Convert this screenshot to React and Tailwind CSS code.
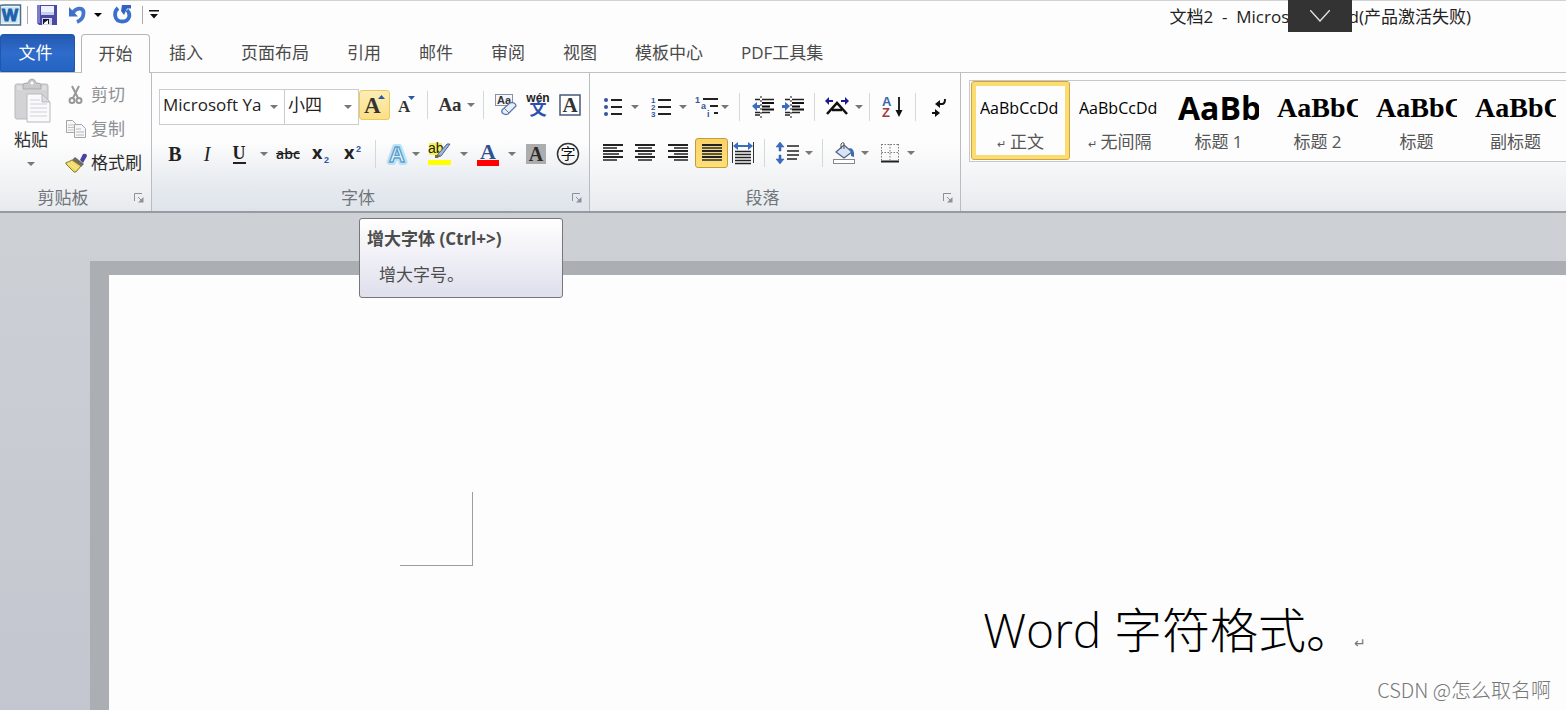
import React, { useState } from 'react';
import clsx from 'clsx';

const SERIF = '"Liberation Serif", serif';
const SANS = '"Open Sans", "Noto Sans CJK SC", sans-serif';
const ARIAL = '"Liberation Sans", sans-serif';

const tabs = ['插入', '页面布局', '引用', '邮件', '审阅', '视图', '模板中心', 'PDF工具集'];

const styles = [
    { name: '正文', mark: true, preview: 'AaBbCcDd', face: 'text-base' },
    { name: '无间隔', mark: true, preview: 'AaBbCcDd', face: 'text-base' },
    { name: '标题 1', preview: 'AaBb', face: 'text-[32px] font-bold' },
    { name: '标题 2', preview: 'AaBbC', face: 'font-["Liberation_Serif",serif] text-[28px] font-bold' },
    { name: '标题', preview: 'AaBbC', face: 'font-["Liberation_Serif",serif] text-[28px] font-bold' },
    { name: '副标题', preview: 'AaBbC', face: 'font-["Liberation_Serif",serif] text-[28px] font-bold' },
];

function Caret({ className = 'w-4', label = '更多选项' }) {
    return (
        <button type="button" aria-label={label} className={clsx('flex shrink-0 items-center justify-center py-2', className)}>
            <svg width="8" height="4" viewBox="0 0 8 4"><path d="M0 0h8L4 4z" fill="#777" /></svg>
        </button>
    );
}

function Sep({ className = 'mx-1.5' }) {
    return <span className={clsx('h-7 w-px shrink-0 bg-[#d5d8db]', className)} />;
}

function Tool({ label, className = 'w-8', active = false, children }) {
    return (
        <button
            type="button"
            aria-label={label}
            className={clsx('flex h-[30px] shrink-0 items-center justify-center', className, active && 'rounded-[3px] border')}
        >
            {children}
        </button>
    );
}

function Group({ title, className, children }) {
    return (
        <section className={clsx('flex flex-col border-r border-[#b9bdc2]', className)}>
            {children}
            <div className="mt-auto flex h-[26px] items-center pr-[7px]">
                <h2 className="flex-1 pr-2 text-center text-[17px] leading-6 text-[#70757b]">{title}</h2>
                <button type="button" aria-label={title}>
                    <svg width="10" height="10" viewBox="0 0 10 10" fill="none" stroke="#8d9196">
                        <path d="M.5 8V.5H8M4 4l3 3" />
                        <path d="M9.500 4v5.500H4z" fill="#8d9196" stroke="none" />
                    </svg>
                </button>
            </div>
        </section>
    );
}

/* Stacked bars: each row is [start, end] */
function Bars({ rows, width = 20, step = 3 }) {
    return (
        <svg width={width} height={rows.length * step} viewBox={`0 0 ${width} ${rows.length * step}`} shapeRendering="crispEdges">
            {rows.map(([a, b], i) => (
                <rect key={i} x={a} y={i * step} width={b - a} height="2" fill={i % 2 ? '#555' : '#222'} />
            ))}
        </svg>
    );
}

function QuickAccess() {
    return (
        <div className="flex items-center">
            <svg width="22" height="22" viewBox="0 0 22 22" aria-label="Word">
                <path d="M0 1.500 4 1h16.500v20H0z" fill="#e9f3f8" stroke="#4d6f88" strokeWidth="1.500" />
                <path d="M1 3h17v16H1z" fill="#cfe6f2" />
                <text x="10" y="17" fontSize="17" fontWeight="bold" textAnchor="middle" fontFamily={ARIAL} fill="#1d62ad" stroke="#1d62ad">W</text>
            </svg>
            <span className="ml-[5px] h-[18px] w-px bg-[#aaa]" />
            <button type="button" aria-label="保存" className="ml-[9px]">
                <svg width="20" height="20" viewBox="0 0 20 20">
                    <path d="M0 0h20v20H2l-2-2z" fill="#4a49a4" />
                    <path d="M0 0h3v18H0z" fill="#7c7bd0" />
                    <path d="M4 1h13v9H4z" fill="#eef1fb" />
                    <path d="M4 7h13v3H4z" fill="#c7cdec" />
                    <path d="M5 13h10v7H5z" fill="#d4d7e8" />
                    <path d="M6 14h6v5H6z" fill="#161637" />
                    <path d="M7 18l4-3v4H7z" fill="#fff" />
                </svg>
            </button>
            <button type="button" aria-label="撤消" className="ml-3">
                <svg width="17" height="19" viewBox="0 0 17 19">
                    <path d="M4 7.500C8 2 15 2.500 14.500 8.500c-.2 4-3 7-6.500 8.500" fill="none" stroke="#4377cd" strokeWidth="3.800" />
                    <path d="M0 2v9.500h9z" fill="#3d6fc8" />
                </svg>
            </button>
            <Caret className="ml-1 w-4 [&_path]:fill-black" />
            <button type="button" aria-label="恢复" className="ml-[7px]">
                <svg width="19" height="19" viewBox="0 0 19 19">
                    <path d="M5 3C.5 7 1 16.500 9 16.500S18 9 14 5" fill="none" stroke="#3a6fce" strokeWidth="3.800" />
                    <path d="M9 0h9v3.500h-4L11 10 8 6z" fill="#3163c2" />
                </svg>
            </button>
            <span className="ml-2.5 h-[18px] w-px bg-[#aaa]" />
            <button type="button" aria-label="自定义快速访问工具栏" className="ml-1.5">
                <svg width="10" height="9" viewBox="0 0 10 9"><path d="M0 0h10v1.500H0zM1 4h8L5 8.500z" fill="#111" /></svg>
            </button>
        </div>
    );
}

function Clipboard() {
    return (
        <Group title="剪贴板" className="w-[152px]">
            <div className="flex pt-[5px]">
                <div className="flex w-[62px] flex-col items-center">
                    <button type="button" className="flex flex-col items-center text-[17px] leading-6 text-[#333]">
                        <svg width="40" height="46" viewBox="0 0 40 46" className="translate-x-0.5">
                            <rect x="2" y="6" width="33" height="35" rx="2" fill="#d3d3d5" stroke="#b9b9bc" />
                            <path d="M4 8h29v4H4z" fill="#dedee0" />
                            <path d="M10 11V7q0-2 4-2h1q1-4 4-4t4 4h1q4 0 4 2v4z" fill="#c9c9cc" stroke="#a8a8ac" />
                            <circle cx="19" cy="5" r="1.500" fill="#fff" />
                            <path d="M14 16h15l8 8v20H14z" fill="#fafafb" stroke="#b8b9bf" />
                            <path d="M29 16v8h8z" fill="#dcdce2" stroke="#b8b9bf" />
                            <path d="M17 22h10M17 26h17M17 30h17M17 34h17M17 38h17" stroke="#cfd0da" />
                        </svg>
                        <span className="mt-1">粘贴</span>
                    </button>
                    <Caret className="mt-0.5 w-8" label="粘贴选项" />
                </div>
                <div className="flex flex-col pl-[3px] text-[17px]">
                    <button type="button" disabled className="flex h-[34px] items-center gap-[3px] text-[#8e9093]">
                        <svg width="23" height="20" viewBox="0 0 23 20" fill="none" stroke="#98989b">
                            <path d="M7 1l6 12M14 1L8 13" strokeWidth="2" />
                            <circle cx="7" cy="15.500" r="2.500" strokeWidth="2" />
                            <circle cx="14" cy="15.500" r="2.500" strokeWidth="2" />
                        </svg>
                        剪切
                    </button>
                    <button type="button" disabled className="flex h-[34px] items-center gap-[3px] text-[#8e9093]">
                        <svg width="23" height="18" viewBox="0 0 23 18" fill="#f7f7f8" stroke="#a5a5a9">
                            <path d="M1.500.5h6l3 3v9h-9z" />
                            <path d="M3 5h6M3 7.500h6M3 10h6" stroke="#c3c3c7" />
                            <path d="M9.500 4.500h7l4 4v9h-11z" />
                            <path d="M11 9h5M11 12h8M11 15h8" stroke="#b9b9bd" />
                        </svg>
                        复制
                    </button>
                    <button type="button" className="flex h-[34px] items-center gap-[3px] text-[#2b2b2b]">
                        <svg width="23" height="20" viewBox="0 0 23 20">
                            <path d="M15 7l3-6q4-1 4 2l-4 7z" fill="#4741a0" />
                            <path d="M10 4l9 7-3 3-9-7z" fill="#6e6b62" />
                            <path d="M7 7l9 6-5 6q-2 1-4-2l-3-3-3-3q-1-2 2-2z" fill="#ecd862" stroke="#8d7a32" />
                            <path d="M3 10l8 6M6 9l7 6" stroke="#fff3a5" />
                        </svg>
                        格式刷
                    </button>
                </div>
            </div>
        </Group>
    );
}

function GrowFont() {
    return (
        <div className="relative">
            <button
                type="button"
                aria-describedby="grow-tip"
                aria-label="增大字体"
                className="flex h-[30px] w-[31px] items-center justify-center rounded-[3px] border border-[#ecc95c] bg-gradient-to-b from-[#fdedb5] to-[#fbdf86]"
            >
                <svg width="23" height="26" viewBox="0 0 23 26">
                    <text x="1" y="21" fontSize="23" fontWeight="bold" fontFamily={SERIF} fill="#333">A</text>
                    <path d="M15 7h7l-3.500-4z" fill="#2c55a5" />
                </svg>
            </button>
            <div
                id="grow-tip"
                role="tooltip"
                className="absolute left-0 top-32 z-10 h-20 w-[204px] rounded-[3px] border border-[#777] bg-gradient-to-b from-white to-[#dfdfed] px-[7px] pt-2 text-[17px] leading-6 text-[#4c4c4c]"
            >
                <p className="font-bold">增大字体 (Ctrl+&gt;)</p>
                <p className="mt-3 pl-3">增大字号。</p>
            </div>
        </div>
    );
}

function FontGroup() {
    const [font, setFont] = useState('Microsoft Ya');
    const [size, setSize] = useState('小四');

    return (
        <Group title="字体" className="w-[438px] bg-gradient-to-b from-transparent via-transparent to-[#d9e0ea]/60">
            <div className="flex h-[52px] pl-[7px] pt-4">
                <label className="relative flex h-9 w-[126px] border border-[#c9ccd0] bg-white">
                    <span className="sr-only">字体</span>
                    <select value={font} onChange={(e) => setFont(e.target.value)} className="w-full appearance-none pb-1 pl-[3px] text-[17px] text-[#222]">
                        <option>Microsoft Ya</option>
                    </select>
                    <svg className="pointer-events-none absolute right-1.5 top-[15px]" width="8" height="4" viewBox="0 0 8 4"><path d="M0 0h8L4 4z" fill="#777" /></svg>
                </label>
                <label className="relative -ml-px flex h-9 w-[75px] border border-[#c9ccd0] bg-white">
                    <span className="sr-only">字号</span>
                    <select value={size} onChange={(e) => setSize(e.target.value)} className="w-full appearance-none pb-1 pl-[3px] text-[17px] text-[#222]">
                        <option>小四</option>
                    </select>
                    <svg className="pointer-events-none absolute right-1.5 top-[15px]" width="8" height="4" viewBox="0 0 8 4"><path d="M0 0h8L4 4z" fill="#777" /></svg>
                </label>
                <div className="flex h-8 items-center">
                    <GrowFont />
                    <Tool label="缩小字体" className="w-[31px]">
                        <svg width="20" height="24" viewBox="0 0 20 24">
                            <text x="2" y="19" fontSize="17" fontWeight="bold" fontFamily={SERIF} fill="#333">A</text>
                            <path d="M12 3h7l-3.500 4z" fill="#2c55a5" />
                        </svg>
                    </Tool>
                    <Sep />
                    <Tool label="更改大小写">
                        <span className="font-['Liberation_Serif',serif] text-[19px] font-bold leading-6 text-[#333]">Aa</span>
                    </Tool>
                    <Caret className="w-2.5" />
                    <Sep className="ml-[7px] mr-1.5" />
                    <Tool label="清除格式">
                        <svg width="24" height="24" viewBox="0 0 24 24">
                            <rect x="1.500" y="1.500" width="17" height="11" fill="#f5f7fb" stroke="#8593ad" />
                            <text x="3" y="11" fontSize="11" fontWeight="bold" fontFamily={ARIAL} fill="#333">Aa</text>
                            <path d="M8 17l8-7q2-1 4 0t2 3l-8 8q-2 1-4 0-3-1-2-4z" fill="#e8effa" stroke="#5c79a8" strokeWidth="1.300" />
                            <path d="M10 15l5 5" stroke="#5c79a8" />
                        </svg>
                    </Tool>
                    <Tool label="拼音指南">
                        <svg width="26" height="28" viewBox="0 0 26 28">
                            <text x="13" y="11" fontSize="12" fontWeight="bold" textAnchor="middle" fontFamily={ARIAL} fill="#222">wén</text>
                            <text x="13" y="24" fontSize="17" fontWeight="bold" textAnchor="middle" fontFamily={SANS} fill="#2c4fb0">文</text>
                        </svg>
                    </Tool>
                    <Tool label="字符边框">
                        <svg width="22" height="22" viewBox="0 0 22 22">
                            <rect x="1" y="1" width="20" height="20" fill="#fff" stroke="#44597c" strokeWidth="1.500" />
                            <text x="11" y="18" fontSize="21" fontWeight="bold" textAnchor="middle" fontFamily={SERIF} fill="#333">A</text>
                        </svg>
                    </Tool>
                </div>
            </div>
            <div className="mt-[13px] flex h-8 items-center pl-[7px] text-[#222]">
                <Tool label="加粗"><span className="font-['Liberation_Serif',serif] text-xl font-black">B</span></Tool>
                <Tool label="倾斜"><span className="font-['Liberation_Serif',serif] text-xl italic">I</span></Tool>
                <Tool label="下划线"><span className="border-b-2 border-[#222] font-['Liberation_Serif',serif] text-lg font-bold leading-[17px]">U</span></Tool>
                <Caret className="w-[17px]" />
                <Tool label="删除线"><span className="text-sm font-semibold line-through">abc</span></Tool>
                <Tool label="下标">
                    <svg width="20" height="22" viewBox="0 0 20 22">
                        <text x="2" y="16" fontSize="18" fontWeight="bold" fontFamily={SANS} fill="#222">x</text>
                        <text x="14" y="20" fontSize="9" fontWeight="bold" fontFamily={ARIAL} fill="#2c55a5">2</text>
                    </svg>
                </Tool>
                <Tool label="上标">
                    <svg width="20" height="22" viewBox="0 0 20 22">
                        <text x="2" y="16" fontSize="18" fontWeight="bold" fontFamily={SANS} fill="#222">x</text>
                        <text x="14" y="9" fontSize="9" fontWeight="bold" fontFamily={ARIAL} fill="#2c55a5">2</text>
                    </svg>
                </Tool>
                <Sep className="mx-[7px]" />
                <Tool label="文本效果" className="w-7">
                    <svg width="24" height="28" viewBox="0 0 24 28" fontFamily={ARIAL} fontWeight="bold" fontSize="22" textAnchor="middle">
                        <text x="12" y="22" fill="none" stroke="#b9e2f5" strokeWidth="6" strokeLinejoin="round">A</text>
                        <text x="12" y="22" fill="#fff" stroke="#5fa3cf" strokeWidth="1.500">A</text>
                    </svg>
                </Tool>
                <Caret className="mr-1 w-[9px]" />
                <Tool label="突出显示">
                    <svg width="24" height="24" viewBox="0 0 24 24">
                        <rect x="1" y="1" width="13" height="12" fill="#f6f04a" />
                        <text x="0" y="11" fontSize="14" fontFamily={ARIAL} fill="#222">ab</text>
                        <path d="M22 2l-9 12-5 1 3-4 8-9z" fill="#9cb6dc" stroke="#4f6488" />
                        <path d="M7 13h5l-2 3H7z" fill="#7c6a36" />
                        <rect x="0" y="18" width="23" height="5" fill="#ff0" />
                    </svg>
                </Tool>
                <Caret />
                <Tool label="字体颜色">
                    <svg width="24" height="26" viewBox="0 0 24 26">
                        <text x="12" y="18" fontSize="22" fontWeight="bold" textAnchor="middle" fontFamily={SERIF} fill="#2f5190">A</text>
                        <rect x="1" y="19" width="22" height="6" fill="#f00" />
                    </svg>
                </Tool>
                <Caret />
                <Tool label="字符底纹">
                    <svg width="20" height="20" viewBox="0 0 20 20">
                        <rect width="20" height="20" fill="#adadad" />
                        <text x="10" y="17" fontSize="20" fontWeight="bold" textAnchor="middle" fontFamily={SERIF} fill="#2b2b2b">A</text>
                    </svg>
                </Tool>
                <Tool label="带圈字符">
                    <svg width="24" height="24" viewBox="0 0 24 24">
                        <circle cx="12" cy="12" r="10.500" fill="none" stroke="#333" strokeWidth="1.500" />
                        <text x="12" y="17" fontSize="15" textAnchor="middle" fontFamily={SANS} fill="#111">字</text>
                    </svg>
                </Tool>
            </div>
        </Group>
    );
}

function IndentIcon({ right = false }) {
    return (
        <svg width="24" height="22" viewBox="0 0 24 22">
            <path d="M3 3.500h5M10 3.500h12M3 16.500h5M10 16.500h8M3 19h5" stroke="#222" strokeWidth="1.600" />
            <path d="M10 7h12M10 10.500h8M10 13.500h12" stroke="#111" strokeWidth="2" />
            <path d="M9 0v22" stroke="#111" strokeDasharray="2 2" />
            <path d={right ? 'M8 10l-5-4v3H0v3h3v3z' : 'M0 10l5-4v3h3v3H5v3z'} fill="#3a6cc0" />
        </svg>
    );
}

function ParagraphGroup() {
    return (
        <Group title="段落" className="w-[371px]">
            <div className="flex h-[52px] pl-[7px] pt-4">
                <div className="flex h-9 items-center">
                    <Tool label="项目符号">
                        <svg width="20" height="18" viewBox="0 0 20 18">
                            <path d="M8 2h11M8 9h11M8 16h11" stroke="#222" strokeWidth="2" />
                            <g fill="#34549b"><circle cx="3" cy="2" r="2" /><circle cx="3" cy="9" r="2" /><circle cx="3" cy="16" r="2" /></g>
                        </svg>
                    </Tool>
                    <Caret className="mr-1 w-3" />
                    <Tool label="编号">
                        <svg width="22" height="22" viewBox="0 0 22 22">
                            <path d="M8 4h13M8 11h13M8 18h13" stroke="#222" strokeWidth="2" />
                            <g fontSize="8" fontWeight="bold" fontFamily={ARIAL} fill="#34549b">
                                <text x="1" y="7">1</text><text x="1" y="14">2</text><text x="1" y="21">3</text>
                            </g>
                        </svg>
                    </Tool>
                    <Caret className="mr-1 w-3" />
                    <Tool label="多级列表" className="w-7">
                        <svg width="26" height="24" viewBox="0 0 26 24">
                            <path d="M9 4h15M16 11h8M20 18h4" stroke="#222" strokeWidth="2" />
                            <g fontSize="9" fontWeight="bold" fontFamily={ARIAL} fill="#34549b">
                                <text x="1" y="8">1</text><text x="7" y="14">a</text><text x="13" y="22">i</text>
                            </g>
                        </svg>
                    </Tool>
                    <Caret className="w-2" />
                    <Sep className="mx-2.5" />
                    <Tool label="减少缩进量" className="w-7"><IndentIcon /></Tool>
                    <Tool label="增加缩进量"><IndentIcon right /></Tool>
                    <Sep className="mx-1" />
                    <Tool label="中文版式" className="w-9">
                        <svg width="24" height="20" viewBox="0 0 24 20">
                            <path d="M2 17L12 6l10 11M7 13h10" fill="none" stroke="#111" strokeWidth="2.600" />
                            <path d="M0 4l4-4v3h4v2H4v3zM24 4l-4-4v3h-4v2h4v3z" fill="#1b1b8c" />
                        </svg>
                    </Tool>
                    <Caret className="w-2" />
                    <Sep className="ml-1.5 mr-2.5" />
                    <Tool label="排序" className="w-6">
                        <svg width="22" height="24" viewBox="0 0 22 24">
                            <g fontSize="13" fontWeight="bold" fontFamily={ARIAL}>
                                <text x="1" y="11" fill="#3866ad">A</text><text x="1" y="22" fill="#a13a3f">Z</text>
                            </g>
                            <path d="M18 2v15" stroke="#111" strokeWidth="1.800" />
                            <path d="M14.500 15h7L18 22z" fill="#111" />
                        </svg>
                    </Tool>
                    <Sep className="mx-[11px]" />
                    <Tool label="显示编辑标记" className="w-6">
                        <svg width="16" height="20" viewBox="0 0 16 20">
                            <path d="M14 2q0 5-3 5H8M1 16h5" fill="none" stroke="#111" strokeWidth="2" />
                            <path d="M4 7l5-4v8zM9 16l-5-4v8z" fill="#111" />
                        </svg>
                    </Tool>
                </div>
            </div>
            <div className="mt-[13px] flex h-[30px] items-center pl-[7px]">
                <Tool label="左对齐"><Bars rows={[[0, 20], [0, 14], [0, 20], [0, 16], [0, 20], [0, 14]]} /></Tool>
                <Tool label="居中"><Bars rows={[[0, 20], [3, 17], [0, 20], [3, 17], [0, 20], [3, 17]]} /></Tool>
                <Tool label="右对齐" className="mr-px w-[33px]"><Bars rows={[[0, 20], [6, 20], [0, 20], [6, 20], [0, 20], [6, 20]]} /></Tool>
                <Tool label="两端对齐" active className="w-[33px] border-[#c79b36] bg-gradient-to-b from-[#fbd368] to-[#fde078]">
                    <Bars rows={[[0, 20], [0, 20], [0, 20], [0, 20], [0, 20], [0, 20]]} />
                </Tool>
                <Tool label="分散对齐" className="w-[30px]">
                    <svg width="24" height="24" viewBox="0 0 24 24">
                        <path d="M1.500 1v21M22.500 1v21" stroke="#333" />
                        <path d="M5 5h14" stroke="#3a6cc0" strokeWidth="2" />
                        <path d="M2 5l5-4v8zM22 5l-5-4v8z" fill="#3a6cc0" />
                        <path d="M4 10.500h16M4 13.500h16M4 16.500h16M4 19.500h16M4 22.500h16" stroke="#222" strokeWidth="1.500" />
                    </svg>
                </Tool>
                <Sep />
                <Tool label="行距" className="w-[34px]">
                    <svg width="28" height="24" viewBox="0 0 28 24">
                        <path d="M13 5h12M13 10h12M13 14h12M13 18h10" stroke="#222" strokeWidth="1.600" />
                        <path d="M6 1l4 5H7v4H5V6H2zM6 23l4-5H7v-4H5v4H2z" fill="#3a6cc0" stroke="#2c55a5" strokeWidth=".5" />
                    </svg>
                </Tool>
                <Caret className="w-2" />
                <Sep className="mx-[9px]" />
                <Tool label="底纹" className="w-6">
                    <svg width="24" height="24" viewBox="0 0 24 24">
                        <path d="M4 11l8-7 8 7-8 6z" fill="#d8e4f4" stroke="#50658c" strokeWidth="1.300" />
                        <path d="M9 8V3q1-2 3-1v6" fill="none" stroke="#555" />
                        <path d="M17 7q6 0 5 9l-3-1V11z" fill="#3a6cae" />
                        <rect x="1.500" y="18.500" width="21" height="4" fill="#fff" stroke="#888" />
                    </svg>
                </Tool>
                <Caret className="w-[18px]" />
                <Tool label="边框">
                    <svg width="18" height="20" viewBox="0 0 18 20" fill="none" stroke="#777">
                        <path d="M.5 1.500h17M.5 9.500h17M.5 1v16M9 1v16M17.500 1v16" strokeDasharray="1.500 1.500" />
                        <path d="M0 18.500h18" stroke="#222" strokeWidth="2" />
                    </svg>
                </Tool>
                <Caret className="w-2.5" />
            </div>
        </Group>
    );
}

function StyleGallery() {
    const [selected, setSelected] = useState('正文');

    return (
        <section className="min-w-0 flex-1 pl-2 pt-[7px]">
            <div className="flex h-[82px] overflow-hidden border-y border-l border-[#c6c9cc] bg-[#fdfdfd] pl-px">
                {styles.map((s) => (
                    <button
                        key={s.name}
                        type="button"
                        onClick={() => setSelected(s.name)}
                        className={clsx(
                            'flex h-[79px] w-[99px] shrink-0 flex-col items-center rounded-[3px] border px-2 pt-1 text-black',
                            selected === s.name
                                ? 'border-[#cfa347] shadow-[inset_0_0_0_4px_#fbdc70]'
                                : 'border-transparent'
                        )}
                    >
                        <span className={clsx('flex h-11 w-[81px] items-center overflow-hidden whitespace-nowrap leading-none', s.face)}>{s.preview}</span>
                        <span className="text-[17px] leading-6 text-[#555]">
                            {s.mark && <span className="mr-1 text-[11px]">↵</span>}
                            {s.name}
                        </span>
                    </button>
                ))}
            </div>
        </section>
    );
}

export default function App() {
    return (
        <div className='flex min-h-screen flex-col overflow-x-hidden bg-[#c9ccd1] font-["Open_Sans","Noto_Sans_CJK_SC",sans-serif]'>
            <header className="bg-[#fdfdfd]">
                <div className="relative flex h-[34px] items-center justify-between border-t border-[#d2d2d2] pb-1.5">
                    <QuickAccess />
                    <h1 className="whitespace-pre pr-[95px] pt-1 text-[17px] leading-6 text-[#222]">文档2  -  Microsoft Word(产品激活失败)</h1>
                    <button type="button" aria-label="展开" className="absolute -top-px right-[214px] flex h-8 w-16 items-center justify-center bg-[#333]">
                        <svg width="20" height="12" viewBox="0 0 20 12" fill="none" stroke="#ddd" strokeWidth="1.500"><path d="M0 0l10 11L20 0" /></svg>
                    </button>
                </div>
                <nav className="flex h-[39px] border-b border-[#bfc2c5] text-[17px] text-[#4a4a4a]">
                    <button type="button" className="mr-1.5 w-[75px] rounded-t-[3px] border border-[#1f57ad] bg-gradient-to-b from-[#2459b0] via-[#2f6ccb] to-[#2463c2] pr-1 text-white">文件</button>
                    <button type="button" className="-mb-px w-[69px] rounded-t-[4px] border border-b-0 border-[#b4b7ba] bg-[#fdfdfd]">开始</button>
                    {tabs.map((t) => (
                        <button key={t} type="button" className="whitespace-nowrap px-[19px]">{t}</button>
                    ))}
                </nav>
            </header>

            <div className="flex h-[140px] border-b-2 border-[#979ba1] bg-gradient-to-b from-[#fdfdfd] from-50% to-[#e8ebee]">
                <Clipboard />
                <FontGroup />
                <ParagraphGroup />
                <StyleGallery />
            </div>

            <main className="flex flex-1 flex-col bg-gradient-to-b from-[#cdd0d5] to-[#c3c6ce] pl-[90px] pt-12">
                <article className="relative flex-1 border-l-[19px] border-t-[14px] border-[#abaeb2] bg-[#fdfdfd]">
                    <div className="ml-[291px] mt-[217px] h-[74px] w-[73px] border-b border-r border-[#9d9d9d]" />
                    <p className="mt-7 whitespace-nowrap pl-[60%] text-5xl font-light leading-[72px] text-black">
                        Word 字符格式。<span className="text-sm text-[#777]">↵</span>
                    </p>
                    <p className='absolute bottom-1.5 right-[15px] font-["Noto_Sans_CJK_SC",sans-serif] text-xl font-light leading-7 text-[#777]'>CSDN @怎么取名啊</p>
                </article>
            </main>
        </div>
    );
}
